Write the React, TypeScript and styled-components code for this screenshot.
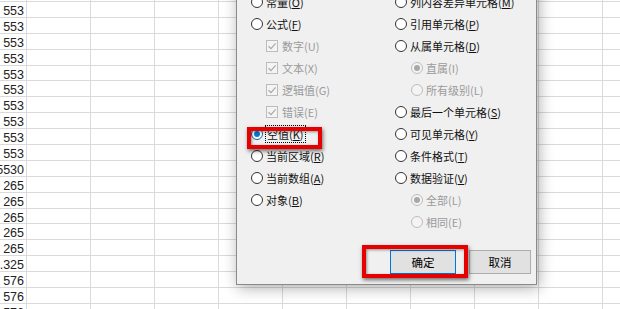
import React from 'react';
import styled, { createGlobalStyle } from 'styled-components';

const GlobalStyle = createGlobalStyle`
  html, body {
    margin: 0;
    padding: 0;
    background: #fff;
  }
  body {
    font-family: 'Noto Sans CJK SC', 'Noto Sans', sans-serif;
  }
`;

const Screen = styled.div`
  position: relative;
  width: 620px;
  height: 309px;
  overflow: hidden;
  background: #fff;
`;

// spreadsheet behind the dialog
const Sheet = styled.div`
  display: flex;
  flex-direction: column;
  margin: -13.9px 0 0 -37px;
`;

const SheetRow = styled.div`
  display: flex;
  flex: none;
  height: 15.9px;
`;

const Cell = styled.div`
  box-sizing: border-box;
  flex: none;
  width: 64px;
  height: 100%;
  border-right: 1px solid #dadada;
  border-bottom: 1px solid #dadada;
  overflow: hidden;
  white-space: nowrap;
  text-align: right;
  padding-right: 2px;
  font-family: 'Liberation Sans', Arial, sans-serif;
  font-size: 12.5px;
  line-height: 18px;
  color: #222;
`;

// dialog
const Dialog = styled.div`
  position: absolute;
  left: 236px;
  top: -22px;
  width: 301px;
  height: 307px;
  box-sizing: border-box;
  display: flex;
  flex-direction: column;
  padding: 12px 0 10px 14px;
  background: #f0f0f0;
  border: 1px solid #8a8a8a;
  box-shadow: 2px 3px 14px rgba(0, 0, 0, 0.32);
  font-size: 11px;
  color: #000;
`;

const Options = styled.div`
  display: grid;
  grid-template-columns: 144px 1fr;
`;

const Column = styled.div`
  display: flex;
  flex-direction: column;
`;

const Option = styled.div<{ $indent?: number; $disabled?: boolean }>`
  display: flex;
  align-items: center;
  height: 22px;
  padding-left: ${(p) => p.$indent || 0}px;
  color: ${(p) => (p.$disabled ? '#9a9a9a' : '#111')};
  white-space: nowrap;

  u {
    text-decoration: ${(p) => (p.$disabled ? 'none' : 'underline')};
    text-decoration-thickness: 1px;
    text-underline-offset: 1px;
  }
`;

const Radio = styled.span<{ $checked?: boolean; $disabled?: boolean }>`
  position: relative;
  flex: none;
  box-sizing: border-box;
  width: 12px;
  height: 12px;
  margin-right: 3px;
  border-radius: 50%;
  border: 1px solid ${(p) => (p.$disabled ? '#bcbcbc' : p.$checked ? '#1a5fa8' : '#333')};
  background: ${(p) => (p.$disabled ? '#f4f4f4' : '#fff')};

  &::after {
    content: '';
    display: ${(p) => (p.$checked ? 'block' : 'none')};
    position: absolute;
    left: 2px;
    top: 2px;
    width: 6px;
    height: 6px;
    border-radius: 50%;
    background: ${(p) => (p.$disabled ? '#a8a8a8' : '#0078d7')};
  }
`;

const CheckBox = styled.span`
  flex: none;
  box-sizing: border-box;
  width: 12px;
  height: 12px;
  margin-right: 4px;
  border: 1px solid #bcbcbc;
  background: #f4f4f4;
  display: flex;
  align-items: center;
  justify-content: center;
`;

const Focus = styled.span`
  outline: 1px dotted #000;
  outline-offset: 0px;
  padding: 0 1px;
`;

const Buttons = styled.div`
  margin-top: auto;
  display: flex;
  justify-content: flex-end;
  gap: 13px;
  padding-right: 5px;
`;

const Button = styled.button<{ $width: number; $default?: boolean }>`
  box-sizing: border-box;
  width: ${(p) => p.$width}px;
  height: 24px;
  padding: 0;
  background: #e1e1e1;
  border: 1px solid ${(p) => (p.$default ? '#0078d7' : '#adadad')};
  font-family: 'Noto Sans CJK SC', sans-serif;
  font-size: 11.5px;
  color: #000;
`;

// red annotation frames drawn over the dialog
const Highlight = styled.div<{ $x: number; $y: number; $w: number; $h: number }>`
  position: absolute;
  left: ${(p) => p.$x}px;
  top: ${(p) => p.$y}px;
  width: ${(p) => p.$w}px;
  height: ${(p) => p.$h}px;
  box-sizing: border-box;
  border: 4px solid #e60000;
  box-shadow: 1px 2px 4px rgba(0, 0, 0, 0.55), inset 1px 1px 3px rgba(0, 0, 0, 0.4);
  pointer-events: none;
`;

const numbers = [
  '553', '553', '553', '553', '553', '553', '553', '553', '553', '553', '553',
  '5530', '265', '265', '265', '265', '265', '1.325', '576', '576', '576',
];

type Item = {
  text: string;
  key: string;
  kind: 'radio' | 'check';
  indent?: number;
  checked?: boolean;
  disabled?: boolean;
  focus?: boolean;
};

const leftItems: Item[] = [
  { text: '常量', key: 'O', kind: 'radio' },
  { text: '公式', key: 'F', kind: 'radio' },
  { text: '数字', key: 'U', kind: 'check', indent: 15, disabled: true },
  { text: '文本', key: 'X', kind: 'check', indent: 15, disabled: true },
  { text: '逻辑值', key: 'G', kind: 'check', indent: 15, disabled: true },
  { text: '错误', key: 'E', kind: 'check', indent: 15, disabled: true },
  { text: '空值', key: 'K', kind: 'radio', checked: true, focus: true },
  { text: '当前区域', key: 'R', kind: 'radio' },
  { text: '当前数组', key: 'A', kind: 'radio' },
  { text: '对象', key: 'B', kind: 'radio' },
];

const rightItems: Item[] = [
  { text: '列内容差异单元格', key: 'M', kind: 'radio' },
  { text: '引用单元格', key: 'P', kind: 'radio' },
  { text: '从属单元格', key: 'D', kind: 'radio' },
  { text: '直属', key: 'I', kind: 'radio', indent: 16, checked: true, disabled: true },
  { text: '所有级别', key: 'L', kind: 'radio', indent: 16, disabled: true },
  { text: '最后一个单元格', key: 'S', kind: 'radio' },
  { text: '可见单元格', key: 'Y', kind: 'radio' },
  { text: '条件格式', key: 'T', kind: 'radio' },
  { text: '数据验证', key: 'V', kind: 'radio' },
  { text: '全部', key: 'L', kind: 'radio', indent: 16, checked: true, disabled: true },
  { text: '相同', key: 'E', kind: 'radio', indent: 16, disabled: true },
];

const Check = () => (
  <svg width="10" height="10" viewBox="0 0 10 10">
    <path d="M1.5 5.2 L4 7.6 L8.6 2.4" fill="none" stroke="#a8a8a8" strokeWidth="1.2" />
  </svg>
);

const OptionRow = ({ item }: { item: Item }) => {
  const label = (
    <>
      {item.text}(<u>{item.key}</u>)
    </>
  );
  return (
    <Option $indent={item.indent} $disabled={item.disabled}>
      {item.kind === 'radio' ? (
        <Radio $checked={item.checked} $disabled={item.disabled} />
      ) : (
        <CheckBox>
          <Check />
        </CheckBox>
      )}
      {item.focus ? <Focus>{label}</Focus> : <span>{label}</span>}
    </Option>
  );
};

export default function App() {
  return (
    <>
      <GlobalStyle />
      <Screen>
        <Sheet>
          {numbers.map((n, i) => (
            <SheetRow key={i}>
              <Cell>{n}</Cell>
              {Array.from({ length: 10 }).map((_, j) => (
                <Cell key={j} />
              ))}
            </SheetRow>
          ))}
        </Sheet>
        <Dialog>
          <Options>
            <Column>
              {leftItems.map((item) => (
                <OptionRow key={item.text} item={item} />
              ))}
            </Column>
            <Column>
              {rightItems.map((item) => (
                <OptionRow key={item.text} item={item} />
              ))}
            </Column>
          </Options>
          <Buttons>
            <Button $width={66} $default>
              确定
            </Button>
            <Button $width={62}>取消</Button>
          </Buttons>
          <Highlight $x={10} $y={148} $w={75} $h={22} />
          <Highlight $x={125} $y={266} $w={106} $h={33} />
        </Dialog>
      </Screen>
    </>
  );
}
